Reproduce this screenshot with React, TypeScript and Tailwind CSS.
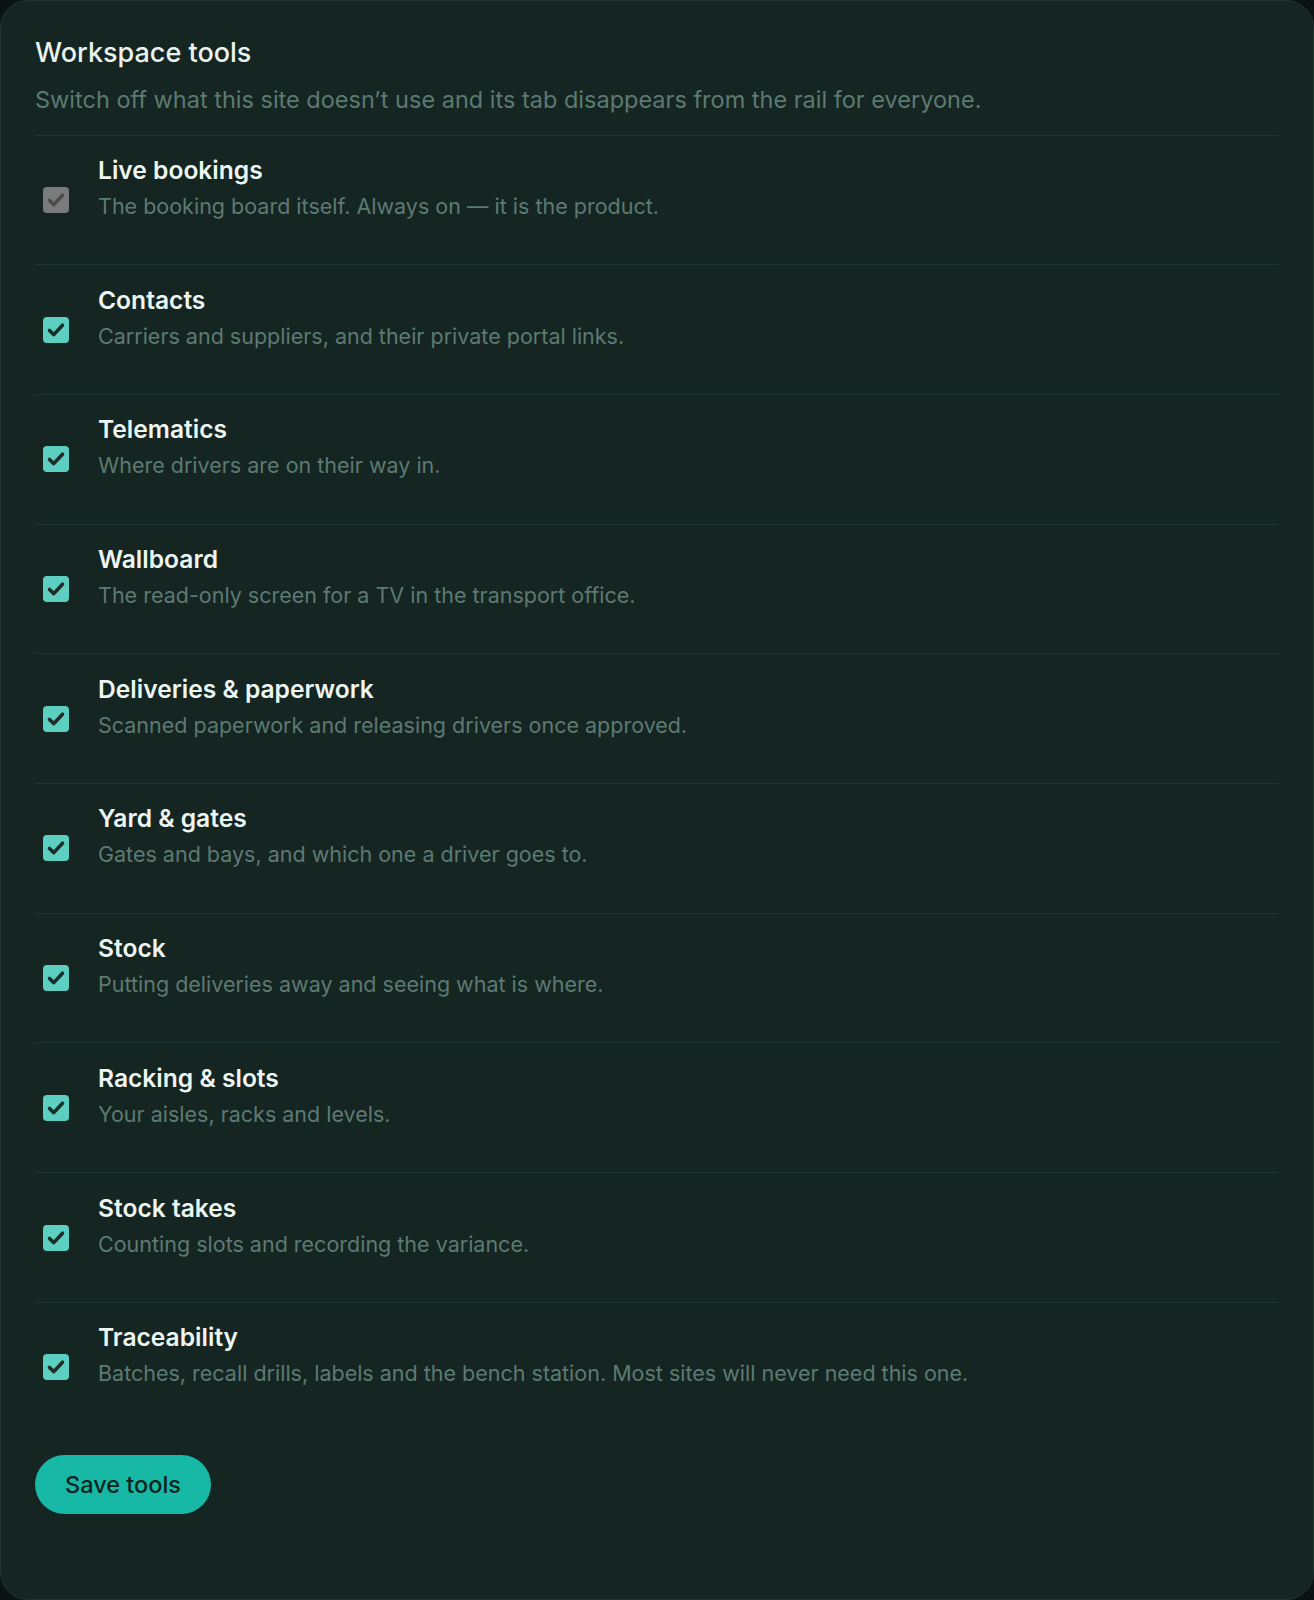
import { useState } from 'react'

interface Tool {
  id: string
  name: string
  description: string
  locked?: boolean
}

const TOOLS: Tool[] = [
  { id: 'bookings', name: 'Live bookings', description: 'The booking board itself. Always on — it is the product.', locked: true },
  { id: 'contacts', name: 'Contacts', description: 'Carriers and suppliers, and their private portal links.' },
  { id: 'telematics', name: 'Telematics', description: 'Where drivers are on their way in.' },
  { id: 'wallboard', name: 'Wallboard', description: 'The read-only screen for a TV in the transport office.' },
  { id: 'deliveries', name: 'Deliveries & paperwork', description: 'Scanned paperwork and releasing drivers once approved.' },
  { id: 'yard', name: 'Yard & gates', description: 'Gates and bays, and which one a driver goes to.' },
  { id: 'stock', name: 'Stock', description: 'Putting deliveries away and seeing what is where.' },
  { id: 'racking', name: 'Racking & slots', description: 'Your aisles, racks and levels.' },
  { id: 'stocktakes', name: 'Stock takes', description: 'Counting slots and recording the variance.' },
  { id: 'traceability', name: 'Traceability', description: 'Batches, recall drills, labels and the bench station. Most sites will never need this one.' },
]

function CheckBox({ checked, locked, onToggle }: { checked: boolean; locked?: boolean; onToggle: () => void }) {
  const box = locked
    ? 'bg-[#7a7c7b]'
    : checked
      ? 'bg-[#5ccfc1]'
      : 'bg-transparent border-2 border-[#4a625b]'
  const tick = locked ? '#4b4d4c' : '#1f2d29'

  return (
    <button
      type="button"
      disabled={locked}
      onClick={onToggle}
      className={`mt-[33px] flex h-[26px] w-[26px] shrink-0 items-center justify-center rounded-[4px] ${box}`}
    >
      {checked && (
        <svg viewBox="0 0 26 26" className="h-[26px] w-[26px]">
          <polyline
            points="6.5,13.5 10.8,17.6 19.5,8.2"
            fill="none"
            stroke={tick}
            strokeWidth="3.6"
            strokeLinecap="round"
            strokeLinejoin="round"
          />
        </svg>
      )}
    </button>
  )
}

export default function App() {
  const [enabled, setEnabled] = useState<Record<string, boolean>>(
    Object.fromEntries(TOOLS.map(t => [t.id, true]))
  )

  const toggle = (id: string) => setEnabled(prev => ({ ...prev, [id]: !prev[id] }))

  return (
    <div className="min-h-screen bg-[#0a1311] font-['Inter',sans-serif]">
      <div className="rounded-[28px] border border-[#20362f] bg-[#152521] px-[34px] pt-[36px] pb-[85px]">
        <h2 className="text-[27px] font-medium leading-8 text-[#eaf3ef]">Workspace tools</h2>
        <p className="mt-[16px] text-[23.5px] leading-[30px] text-[#5d7a72]">
          Switch off what this site doesn’t use and its tab disappears from the rail for everyone.
        </p>

        <div className="mt-[19.5px]">
          {TOOLS.map(tool => (
            <div
              key={tool.id}
              className="flex h-[129.7px] items-start border-t border-[#1f3530] pt-[18.5px] pl-[8px]"
            >
              <CheckBox
                checked={enabled[tool.id]}
                locked={tool.locked}
                onToggle={() => toggle(tool.id)}
              />
              <div className="ml-[29px]">
                <div className="text-[24.6px] font-semibold leading-8 text-[#eef6f3]">{tool.name}</div>
                <div className="mt-[5px] text-[21.5px] leading-[30px] text-[#5d7a72]">{tool.description}</div>
              </div>
            </div>
          ))}
        </div>

        <button
          type="button"
          className="mt-[23.5px] h-[59px] rounded-full bg-[#18b8a6] px-[30px] text-[23.5px] font-medium text-[#0b2420]"
        >
          Save tools
        </button>
      </div>
    </div>
  )
}
